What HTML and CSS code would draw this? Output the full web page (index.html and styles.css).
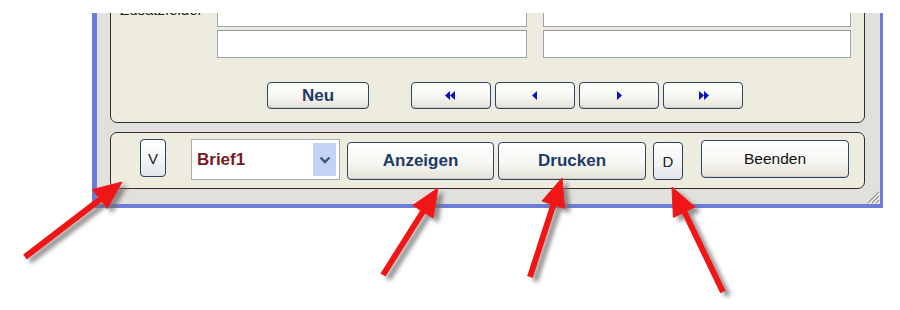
FILE: index.html
```html
<!DOCTYPE html>
<html>
<head>
<meta charset="utf-8">
<link rel="stylesheet" href="styles.css">
</head>
<body>
<div class="stage">
  <div class="window">
    <div class="group upper">
      <div class="fields">
        <div class="label">Zusatzfelder</div>
        <div class="field"></div>
        <div class="field"></div>
        <div></div>
        <div class="field"></div>
        <div class="field"></div>
      </div>
      <div class="navrow">
        <button class="btn bold neu">Neu</button>
        <div class="nav">
          <button class="btn navbtn"><svg width="16" height="9" viewBox="0 0 16 9"><path d="M7 0 L2 4.5 L7 9 Z M12 0 L7 4.5 L12 9 Z" fill="#0b10c0"/></svg></button>
          <button class="btn navbtn"><svg width="8" height="9" viewBox="0 0 8 9"><path d="M6 0 L1 4.5 L6 9 Z" fill="#0b10c0"/></svg></button>
          <button class="btn navbtn"><svg width="8" height="9" viewBox="0 0 8 9"><path d="M2 0 L7 4.5 L2 9 Z" fill="#0b10c0"/></svg></button>
          <button class="btn navbtn"><svg width="16" height="9" viewBox="0 0 16 9"><path d="M4 0 L9 4.5 L4 9 Z M9 0 L14 4.5 L9 9 Z" fill="#0b10c0"/></svg></button>
        </div>
      </div>
    </div>
    <div class="group lower">
      <button class="mini v">V</button>
      <div class="combo">
        <span class="combo-text">Brief1</span>
        <span class="drop"><svg width="12" height="8" viewBox="0 0 12 8"><path d="M1.5 1.5 L6 6 L10.5 1.5" fill="none" stroke="#3f5480" stroke-width="2.4"/></svg></span>
      </div>
      <button class="btn bold wide anz">Anzeigen</button>
      <button class="btn bold wide">Drucken</button>
      <button class="mini d">D</button>
      <button class="btn plain wide beenden">Beenden</button>
    </div>
    <svg class="grip" width="16" height="16" viewBox="0 0 16 16">
      <path d="M15 4 L4 15 M15 8 L8 15 M15 12 L12 15" stroke="#9a9a96" stroke-width="1.2"/>
      <path d="M16 5 L5 16 M16 9 L9 16 M16 13 L13 16" stroke="#ffffff" stroke-width="1"/>
    </svg>
  </div>
  <svg class="arrows" width="900" height="310" viewBox="0 0 900 310">
    <defs>
      <filter id="sh" x="-20%" y="-20%" width="140%" height="140%">
        <feDropShadow dx="5" dy="4" stdDeviation="2.2" flood-color="#6d6d6d" flood-opacity="0.75"/>
      </filter>
    </defs>
    <g fill="#f01515" stroke="#f01515" filter="url(#sh)">
      <line x1="25" y1="257" x2="102" y2="198" stroke-width="6"/>
      <polygon points="122,182 107.2,208.6 92.6,189.6" stroke-width="1"/>
      <line x1="383" y1="275" x2="424" y2="210" stroke-width="6"/>
      <polygon points="438,188 433.1,218.1 412.9,205.3" stroke-width="1"/>
      <line x1="530" y1="277" x2="554" y2="203" stroke-width="6"/>
      <polygon points="562,178 564.8,208.4 542.0,201.0" stroke-width="1"/>
      <line x1="723" y1="292" x2="684" y2="211" stroke-width="6"/>
      <polygon points="672,187 695.0,207.0 673.4,217.4" stroke-width="1"/>
    </g>
  </svg>
</div>
</body>
</html>
```

FILE: styles.css
```css
* { box-sizing: border-box; }

html, body {
  margin: 0;
  padding: 0;
  background: #ffffff;
}

body {
  font-family: "Liberation Sans", Arial, sans-serif;
  width: 900px;
  height: 310px;
  overflow: hidden;
}

.stage {
  position: relative;
  width: 900px;
  height: 310px;
  padding: 13px 0 0 92px;
}

.window {
  position: relative;
  width: 791px;
  height: 195px;
  background: #e1e0dc;
  border-left: 5px solid #6d7cd8;
  border-right: 3px solid #6d7cd8;
  border-bottom: 4px solid #6d7cd8;
  overflow: hidden;
  padding: 0 0 0 13px;
}

.group {
  width: 755px;
  background: #eeebdf;
  border: 1px solid #2e2e2e;
  border-radius: 7px;
}

.upper {
  margin-top: -30px;
  padding: 15px 0 13px 9px;
}

.fields {
  display: grid;
  grid-template-columns: 81px 310px 308px;
  grid-auto-rows: 28px;
  column-gap: 16px;
  row-gap: 3px;
}

.label {
  font-size: 15px;
  line-height: 17px;
  padding-top: 2px;
  color: #222;
}

.field {
  background: #ffffff;
  border: 1px solid #98a6b2;
  border-top-color: #8e9aa6;
}

.navrow {
  display: flex;
  margin-top: 24px;
  padding-left: 147px;
  gap: 42px;
}

.nav {
  display: flex;
  gap: 4px;
}

.btn {
  margin: 0;
  padding: 0;
  height: 27px;
  border: 1px solid #2f4566;
  border-radius: 4px;
  background: linear-gradient(#ffffff 0%, #f6f6f2 55%, #e4e2d8 100%);
  box-shadow: inset 0 -1px 0 #d0cec4, inset 0 1px 0 #ffffff;
  font-family: "Liberation Sans", Arial, sans-serif;
  display: flex;
  align-items: center;
  justify-content: center;
}

.bold {
  font-weight: bold;
  font-size: 17px;
  color: #1e3a68;
}

.plain {
  font-size: 15.5px;
  color: #111;
}

.neu { width: 102px; }

.navbtn { width: 80px; }

.lower {
  margin-top: 9px;
  height: 57px;
  padding: 6px 0 0 29px;
  display: flex;
  align-items: flex-start;
}

.mini {
  margin: 0;
  padding: 0;
  width: 26px;
  height: 38px;
  border: 1px solid #2b3d58;
  border-radius: 4px;
  background: linear-gradient(#ffffff, #f0f2f4 60%, #e2e6ea);
  font-family: "Liberation Sans", Arial, sans-serif;
  font-size: 15px;
  color: #222;
  display: flex;
  align-items: center;
  justify-content: center;
}

.combo {
  margin-left: 25px;
  width: 149px;
  height: 41px;
  background: #ffffff;
  border: 1px solid #a4aeb8;
  display: flex;
  align-items: center;
  justify-content: space-between;
  padding: 0 3px 0 5px;
}

.combo-text {
  font-weight: bold;
  font-size: 17px;
  color: #7a1a22;
}

.drop {
  width: 23px;
  height: 33px;
  background: #c3d3f6;
  display: flex;
  align-items: center;
  justify-content: center;
}

.wide {
  width: 148px;
  height: 38px;
}

.anz {
  margin-left: 7px;
  margin-top: 3px;
  width: 147px;
}

.anz + .btn {
  margin-left: 4px;
  margin-top: 3px;
}

.d {
  margin-left: 7px;
  margin-top: 3px;
  width: 30px;
}

.beenden {
  margin-left: 18px;
  margin-top: 1px;
}

.grip {
  position: absolute;
  right: 0;
  bottom: 0;
}

.arrows {
  position: absolute;
  left: 0;
  top: 0;
  pointer-events: none;
}
```
